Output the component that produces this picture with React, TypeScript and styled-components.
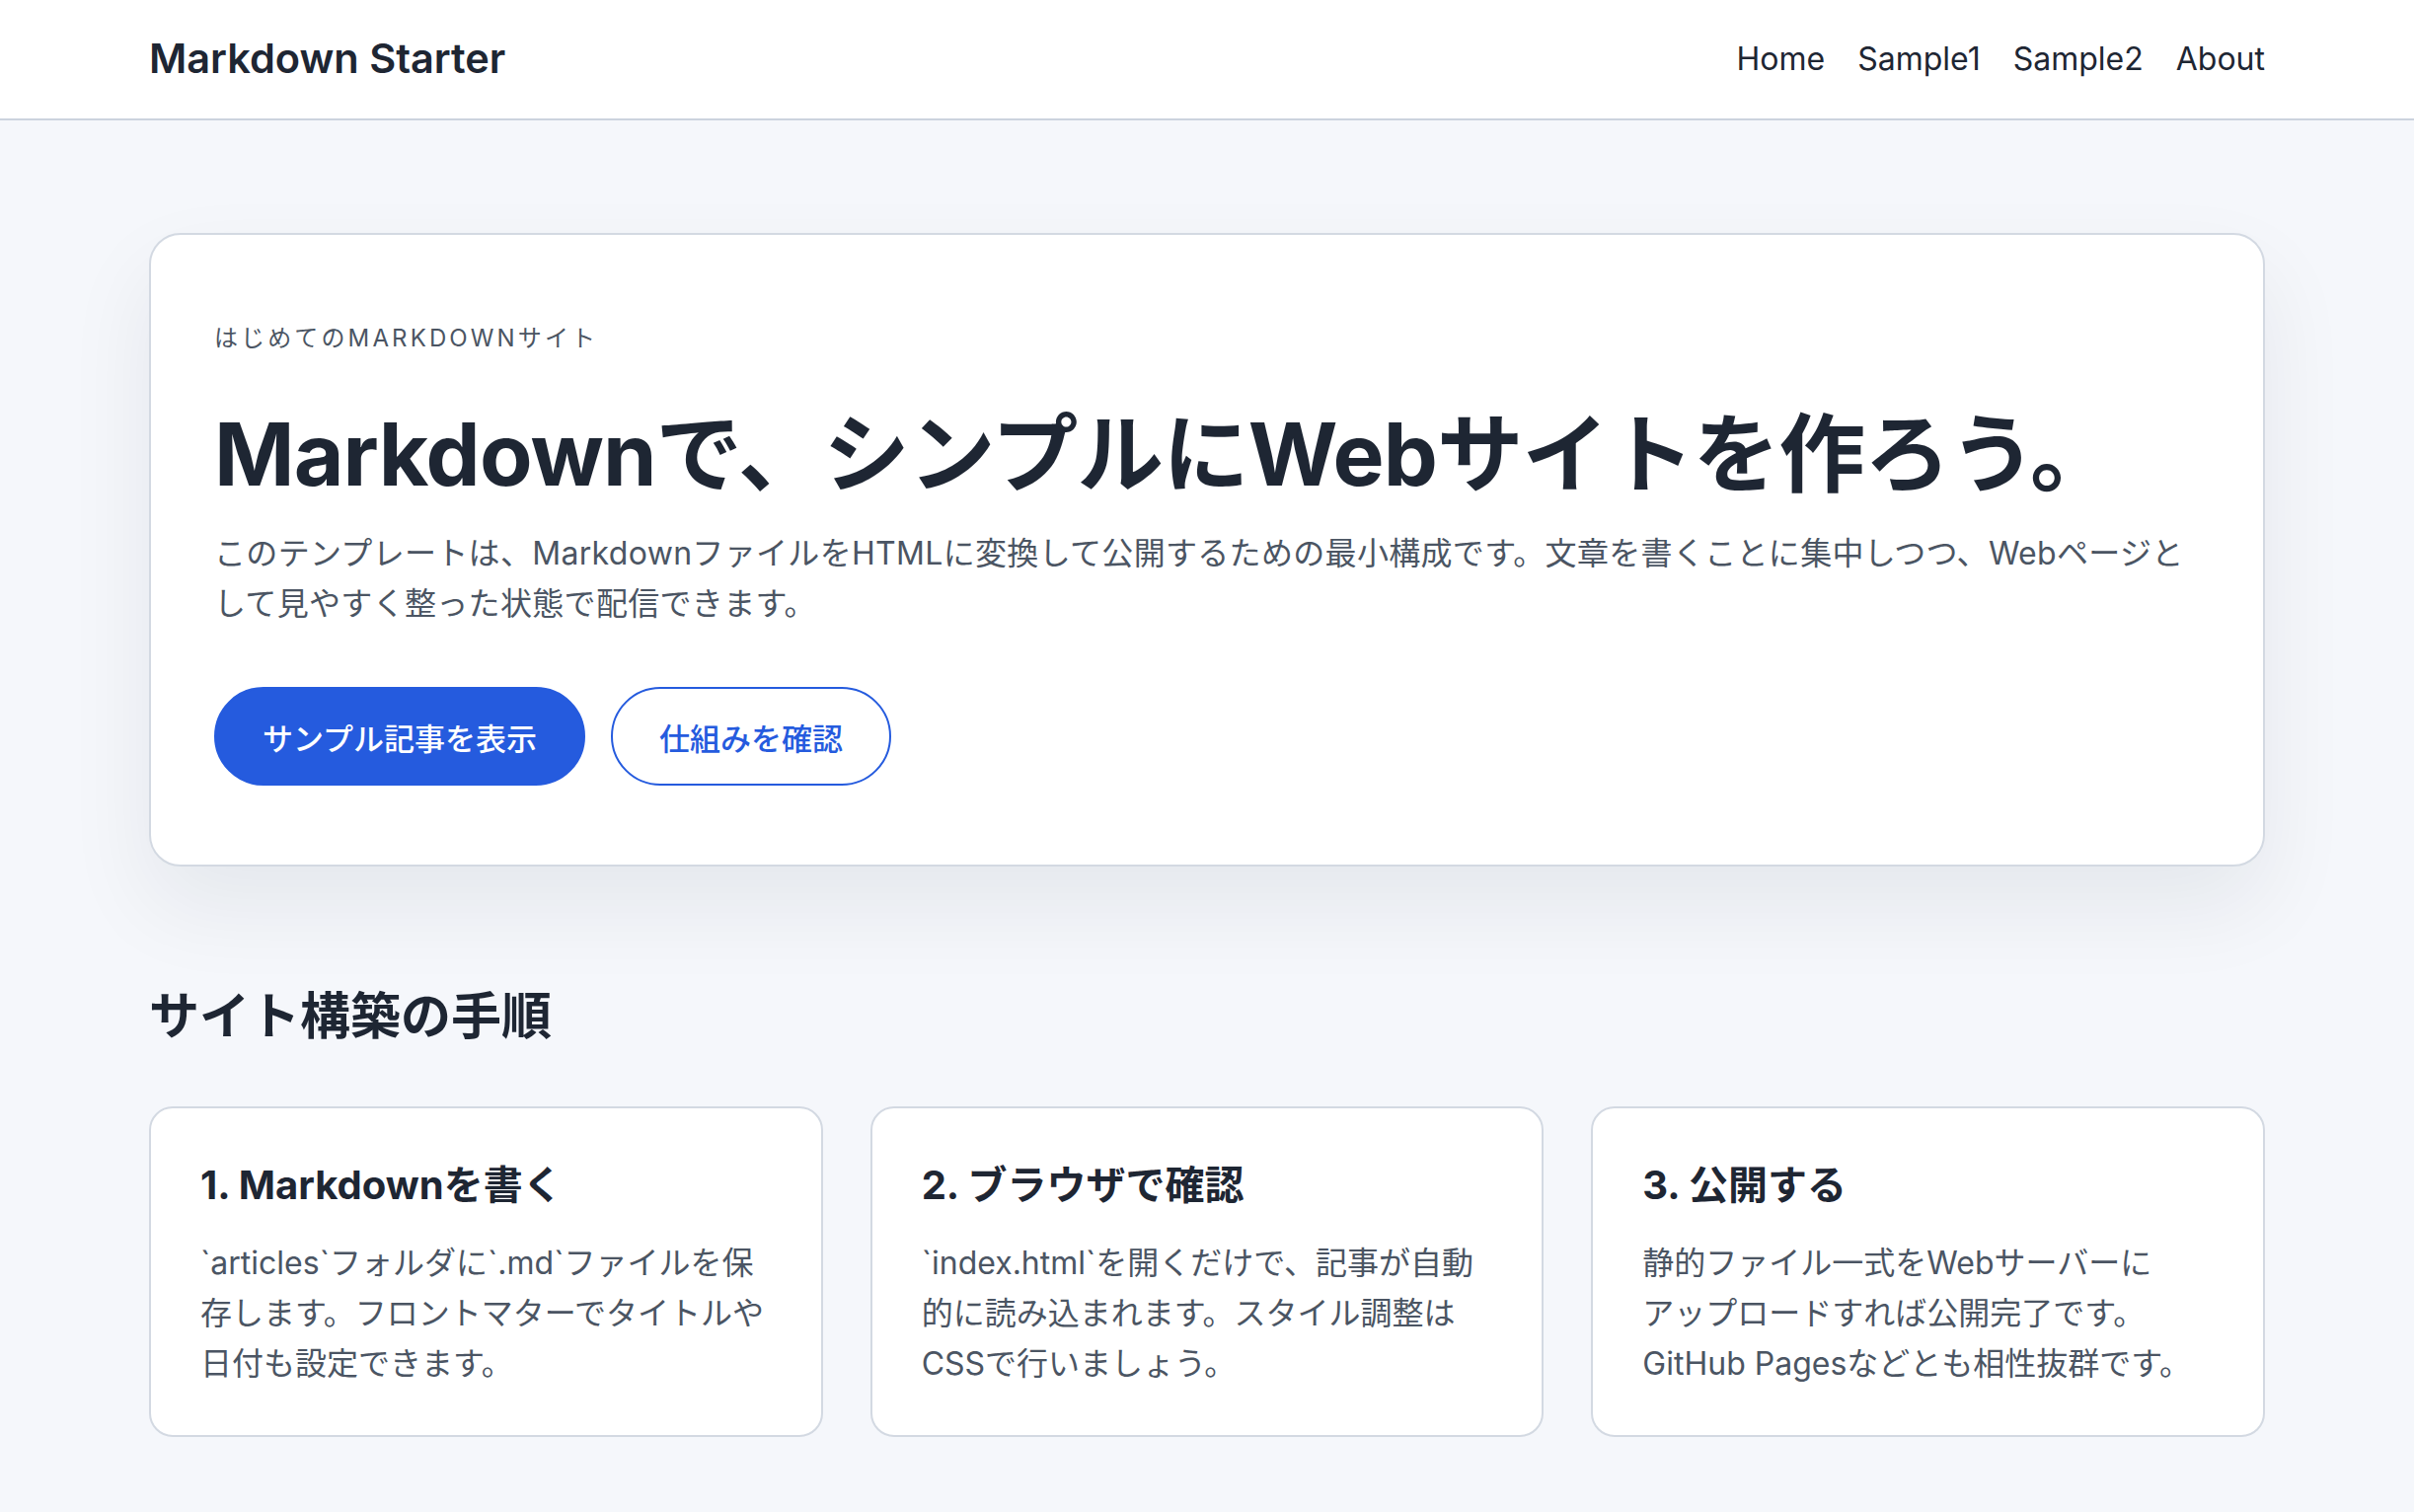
import React from "react";
import styled, { createGlobalStyle } from "styled-components";

const FONT = `Inter, "Noto Sans CJK JP", "Noto Sans", sans-serif`;

const GlobalStyle = createGlobalStyle`
  * { box-sizing: border-box; }
  html, body { margin: 0; padding: 0; }
  body {
    background: #f5f7fb;
    font-family: ${FONT};
    color: #1e2633;
    -webkit-font-smoothing: antialiased;
  }
`;

const Page = styled.div`
  min-height: 100vh;
  line-break: strict;
`;

const Header = styled.header`
  background: #ffffff;
  border-bottom: 2px solid #ccd3de;
  height: 122px;
`;

const Container = styled.div`
  width: 2144px;
  margin: 0 auto;
`;

const HeaderInner = styled(Container)`
  height: 118px;
  display: flex;
  align-items: center;
  justify-content: space-between;
`;

const Logo = styled.a`
  font-size: 41.5px;
  font-weight: 600;
  color: #1e2633;
  text-decoration: none;
`;

const Nav = styled.nav`
  display: flex;
  gap: 33px;
`;

const NavLink = styled.a`
  font-size: 32px;
  color: #1e2633;
  text-decoration: none;
`;

const Main = styled.main`
  padding: 114px 0 80px;
`;

const Hero = styled.section`
  background: #ffffff;
  border: 2px solid #d3d9e2;
  border-radius: 32px;
  padding: 86px 64px 80px;
  box-shadow: 0 40px 90px rgba(15, 23, 42, 0.07);
`;

const Eyebrow = styled.p`
  margin: 0 0 46px;
  font-size: 24px;
  line-height: 38px;
  letter-spacing: 0.13em;
  text-transform: uppercase;
  color: #4b5563;
`;

const HeroTitle = styled.h1`
  margin: 0 0 22px;
  font-size: 87.5px;
  line-height: 1.2;
  font-weight: 700;
  letter-spacing: -0.01em;
  color: #1e2633;
`;

const Lead = styled.p`
  margin: 0 0 59px;
  font-size: 32px;
  line-height: 1.6;
  letter-spacing: 0.01em;
  color: #4b5563;
`;

const Actions = styled.div`
  display: flex;
  gap: 26px;
`;

const Button = styled.a<{ $variant: "primary" | "outline" }>`
  display: inline-flex;
  align-items: center;
  justify-content: center;
  height: 100px;
  padding: 0 47px;
  border-radius: 999px;
  border: 2px solid #255bde;
  font-size: 31px;
  font-weight: 500;
  text-decoration: none;
  background: ${(p) => (p.$variant === "primary" ? "#255bde" : "#ffffff")};
  color: ${(p) => (p.$variant === "primary" ? "#ffffff" : "#255bde")};
`;

const SectionTitle = styled.h2`
  margin: 119px 0 57px;
  font-size: 51px;
  line-height: 1.3;
  font-weight: 700;
  color: #1e2633;
`;

const Steps = styled.div`
  display: grid;
  grid-template-columns: repeat(3, 1fr);
  gap: 48px;
`;

const StepCard = styled.article`
  background: #ffffff;
  border: 2px solid #d3d9e2;
  border-radius: 24px;
  padding: 50px 50px 47px;
`;

const StepTitle = styled.h3`
  margin: 0 0 25px;
  font-size: 40px;
  line-height: 1.4;
  font-weight: 700;
  color: #1e2633;
`;

const StepText = styled.p`
  margin: 0;
  font-size: 32px;
  line-height: 1.6;
  color: #4b5563;
`;

const steps = [
  {
    title: "1. Markdownを書く",
    text: "`articles`フォルダに`.md`ファイルを保存します。フロントマターでタイトルや日付も設定できます。",
  },
  {
    title: "2. ブラウザで確認",
    text: "`index.html`を開くだけで、記事が自動的に読み込まれます。スタイル調整はCSSで行いましょう。",
  },
  {
    title: "3. 公開する",
    text: "静的ファイル一式をWebサーバーにアップロードすれば公開完了です。GitHub Pagesなどとも相性抜群です。",
  },
];

export default function App() {
  return (
    <Page lang="ja">
      <GlobalStyle />
      <Header>
        <HeaderInner>
          <Logo href="#">Markdown Starter</Logo>
          <Nav>
            <NavLink href="#">Home</NavLink>
            <NavLink href="#">Sample1</NavLink>
            <NavLink href="#">Sample2</NavLink>
            <NavLink href="#">About</NavLink>
          </Nav>
        </HeaderInner>
      </Header>
      <Main>
        <Container>
          <Hero>
            <Eyebrow>はじめてのMarkdownサイト</Eyebrow>
            <HeroTitle>Markdownで、シンプルにWebサイトを作ろう。</HeroTitle>
            <Lead>
              このテンプレートは、MarkdownファイルをHTMLに変換して公開するための最小構成です。文章を書くことに集中しつつ、Webページとして見やすく整った状態で配信できます。
            </Lead>
            <Actions>
              <Button $variant="primary" href="#">サンプル記事を表示</Button>
              <Button $variant="outline" href="#">仕組みを確認</Button>
            </Actions>
          </Hero>
          <SectionTitle>サイト構築の手順</SectionTitle>
          <Steps>
            {steps.map((s) => (
              <StepCard key={s.title}>
                <StepTitle>{s.title}</StepTitle>
                <StepText>{s.text}</StepText>
              </StepCard>
            ))}
          </Steps>
        </Container>
      </Main>
    </Page>
  );
}
